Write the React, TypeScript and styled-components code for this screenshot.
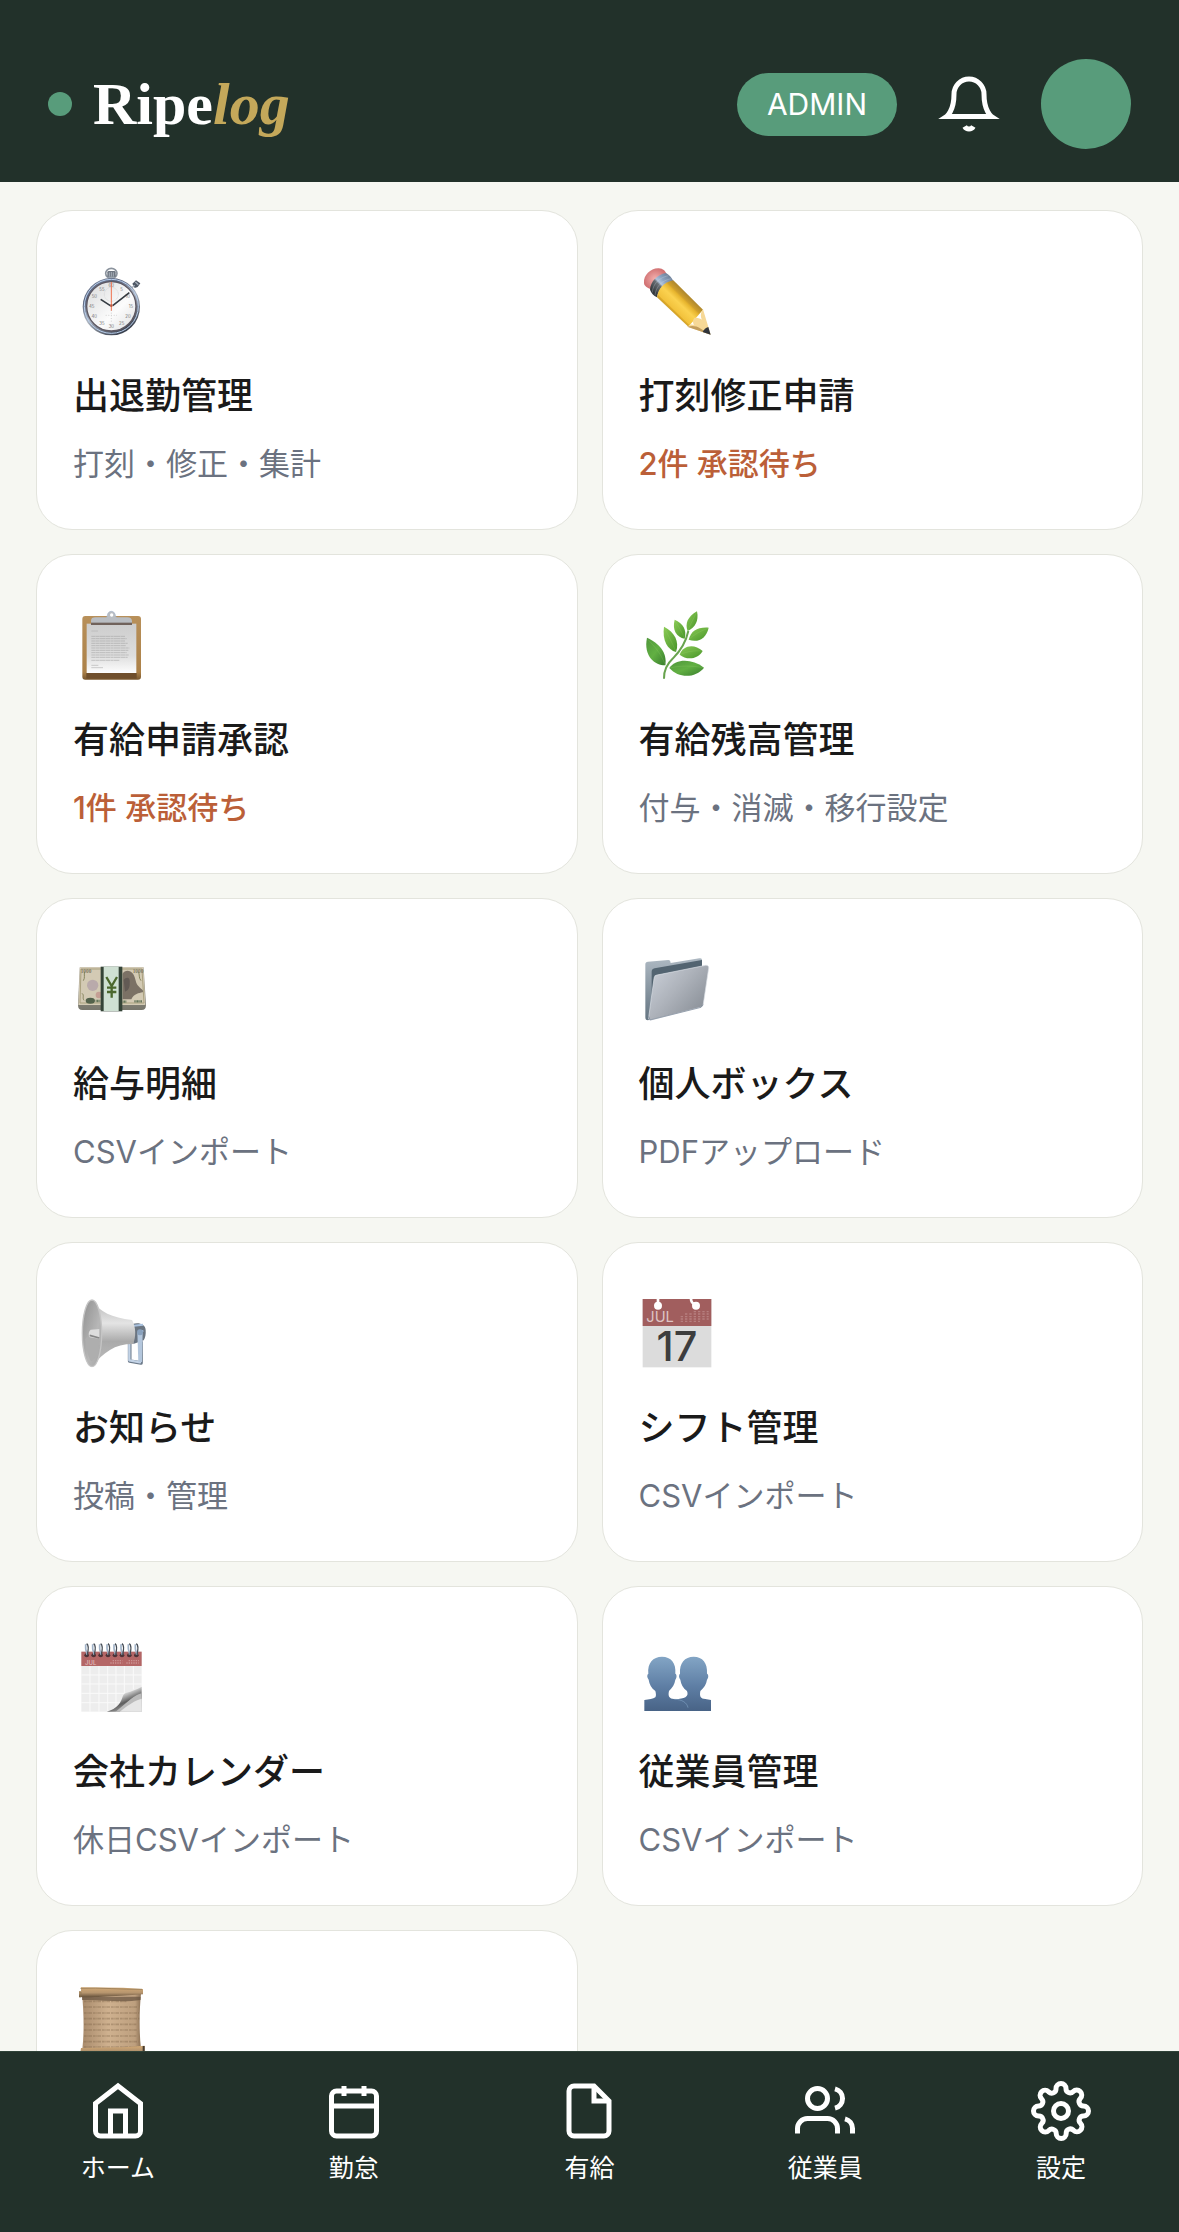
import React, {useState} from 'react';

// Libraries
import styled, {createGlobalStyle, css} from 'styled-components';

const GlobalStyle = createGlobalStyle`
  :root {
    --color-brand-dark: #22312a;
    --color-brand-line: #2f4238;
    --color-accent: #589c7b;
    --color-gold: #c4a85a;
    --color-background: #f6f7f2;
    --color-card: #ffffff;
    --color-border: #e3e4dd;
    --color-text: #1a1a1a;
    --color-text-muted: #6b7280;
    --color-alert: #bb5f38;
  }

  * {
    box-sizing: border-box;
  }

  body {
    margin: 0;
    background: var(--color-background);
    font-family: Inter, 'Noto Sans CJK JP', sans-serif;
    color: var(--color-text);
  }
`;

const Shell = styled.div`
  display: flex;
  flex-direction: column;
  height: 100vh;
`;

const Header = styled.header`
  flex: none;
  display: flex;
  align-items: center;
  justify-content: space-between;
  padding: 59px 48px 33px;
  background: var(--color-brand-dark);
`;

const Brand = styled.a`
  display: flex;
  align-items: center;
  gap: 21px;
  color: #fff;
  text-decoration: none;
`;

const BrandDot = styled.span`
  width: 24px;
  height: 24px;
  border-radius: 50%;
  background: var(--color-accent);
`;

const BrandName = styled.span`
  font-family: 'Liberation Serif', serif;
  font-size: 60px;
  font-weight: 700;
  line-height: 64px;

  em {
    color: var(--color-gold);
  }
`;

const HeaderActions = styled.div`
  display: flex;
  align-items: center;
  gap: 42px;
`;

const RoleBadge = styled.span`
  padding: 0 30px;
  border-radius: 32px;
  background: var(--color-accent);
  color: #fff;
  font-size: 30px;
  line-height: 63px;
`;

const IconButton = styled.button`
  display: flex;
  padding: 0;
  border: 0;
  background: none;
  color: #fff;
  cursor: pointer;
`;

const Avatar = styled.button`
  width: 90px;
  height: 90px;
  padding: 0;
  border: 0;
  border-radius: 50%;
  background: var(--color-accent);
  cursor: pointer;
`;

const LineIcon = styled.svg`
  display: block;
  width: 60px;
  height: 60px;
  fill: none;
  stroke: currentColor;
  overflow: visible;
`;

const Main = styled.main`
  flex: 1;
  min-height: 0;
  padding: 28px 36px;
  overflow-y: auto;
  scrollbar-width: none;
`;

const Grid = styled.div`
  display: grid;
  grid-template-columns: repeat(2, minmax(0, 1fr));
  gap: 24px;
`;

const Card = styled.a`
  min-height: 320px;
  padding: 54px 36px 42px;
  border: 1px solid var(--color-border);
  border-radius: 36px;
  background: var(--color-card);
  color: inherit;
  text-decoration: none;
`;

const CardIcon = styled.svg`
  display: block;
  width: 76px;
  height: 70px;
  overflow: visible;
`;

const CardTitle = styled.h2`
  margin: 34px 0 18px;
  font-size: 36px;
  font-weight: 500;
  line-height: 54px;
`;

const CardNote = styled.p<{$alert?: boolean}>`
  margin: 0;
  font-size: 31px;
  line-height: 46px;
  color: var(--color-text-muted);

  ${({$alert}) =>
    $alert &&
    css`
      color: var(--color-alert);
      font-weight: 500;
    `}
`;

const TabBar = styled.nav`
  flex: none;
  display: grid;
  grid-template-columns: repeat(5, 1fr);
  padding: 29px 0 47px;
  border-top: 1px solid var(--color-brand-line);
  background: var(--color-brand-dark);
`;

const Tab = styled.a`
  display: flex;
  flex-direction: column;
  align-items: center;
  gap: 10px;
  color: #fff;
  font-size: 25px;
  line-height: 34px;
  text-decoration: none;
`;

// Card illustrations
const Stopwatch = () => (
  <CardIcon viewBox="39 45 228 210" aria-hidden="true">
    <defs>
      <linearGradient id="sw-rim" x1="0" y1="0" x2="0.6" y2="1">
        <stop offset="0" stopColor="#8e9aae" />
        <stop offset="0.3" stopColor="#55607a" />
        <stop offset="0.6" stopColor="#aeb6c1" />
        <stop offset="1" stopColor="#39404e" />
      </linearGradient>
      <linearGradient id="sw-face" x1="0" y1="0" x2="1" y2="1">
        <stop offset="0" stopColor="#d9dadb" />
        <stop offset="0.6" stopColor="#fcfcfc" />
        <stop offset="1" stopColor="#dedfe0" />
      </linearGradient>
    </defs>
    <ellipse cx="154" cy="70" rx="17" ry="15" fill="none" stroke="#8b939d" strokeWidth="5" />
    <rect x="142" y="63" width="25" height="19" rx="4" fill="#6d7580" />
    <path d="M148 67v13M154 66v14M160 67v13" stroke="#c5ccd4" strokeWidth="2" />
    <rect x="145" y="80" width="19" height="8" fill="#9ba4ae" />
    <path d="M217 101l11-10 13 9-8 11-9 3z" fill="#4f5865" />
    <path d="M214 115l10-9M226 96l9 8" stroke="#a5aeb9" strokeWidth="4" />
    <circle cx="154" cy="170" r="86" fill="url(#sw-rim)" />
    <circle cx="154" cy="169" r="81" fill="none" stroke="#b9cfed" strokeWidth="3" />
    <circle cx="154" cy="169" r="74" fill="url(#sw-face)" stroke="#5d5862" strokeWidth="4" />
    <circle cx="154" cy="133" r="21" fill="none" stroke="#c8c8c8" strokeWidth="2" strokeDasharray="2 2" />
    <path d="M154 180v35M137 196h34" stroke="#d1d1d1" strokeWidth="3" strokeDasharray="3 5" />
    <g fill="#737373" fontFamily="Inter, sans-serif" fontSize="13" textAnchor="middle">
      <text x="154" y="112">60</text>
      <text x="185" y="122">5</text>
      <text x="203" y="144">10</text>
      <text x="213" y="174">15</text>
      <text x="204" y="204">20</text>
      <text x="185" y="226">25</text>
      <text x="154" y="234">30</text>
      <text x="126" y="226">35</text>
      <text x="103" y="204">40</text>
      <text x="95" y="174">45</text>
      <text x="103" y="144">50</text>
      <text x="126" y="122">55</text>
    </g>
    <path d="M122 148l29 19M158 167l50-39" stroke="#353b42" strokeWidth="5" />
    <path d="M154 96v86" stroke="#f0714f" strokeWidth="3" />
    <circle cx="154" cy="167" r="4" fill="#bd5b43" />
  </CardIcon>
);

const Pencil = () => (
  <CardIcon viewBox="42 45 228 210" aria-hidden="true">
    <defs>
      <linearGradient id="pn-body" gradientUnits="userSpaceOnUse" x1="135" y1="190" x2="187" y2="136">
        <stop offset="0" stopColor="#b69331" />
        <stop offset="0.18" stopColor="#dda928" />
        <stop offset="0.22" stopColor="#f2c23c" />
        <stop offset="0.55" stopColor="#fbd250" />
        <stop offset="0.75" stopColor="#e7b52e" />
        <stop offset="0.82" stopColor="#cf9f2b" />
        <stop offset="1" stopColor="#b28a2d" />
      </linearGradient>
      <linearGradient id="pn-metal" gradientUnits="userSpaceOnUse" x1="86" y1="126" x2="133" y2="80">
        <stop offset="0" stopColor="#353a3e" />
        <stop offset="0.4" stopColor="#696f75" />
        <stop offset="0.5" stopColor="#b1c4dc" />
        <stop offset="0.7" stopColor="#8ba3c1" />
        <stop offset="1" stopColor="#71849d" />
      </linearGradient>
      <radialGradient id="pn-eraser">
        <stop offset="0" stopColor="#f4b1af" />
        <stop offset="1" stopColor="#d27374" />
      </radialGradient>
    </defs>
    <path d="M57 98C55 76 77 54 101 55c14 1 20 8 23 16L81 119C66 112 57 108 57 98z" fill="url(#pn-eraser)" />
    <path d="M75 119c2-24 20-45 48-50 9 5 17 13 22 24-23 4-44 22-49 49-10-5-18-13-21-23z" fill="url(#pn-metal)" />
    <path d="M82 127c2-26 20-44 48-50M90 136c3-27 21-45 49-50" fill="none" stroke="#d4dfec" strokeWidth="2" opacity="0.4" />
    <path d="M96 142c4-27 20-45 49-51l89 88-44 51z" fill="url(#pn-body)" />
    <path d="M234 178l23 76-70-24c7-8 16-8 20-5-5-9-3-21 5-22 8 0 16 3 19 6-5-8-5-20 3-31z" fill="#f6d896" />
    <path d="M187 230l70 24-32-19c-10-7-23-9-38-5z" fill="#c39d5c" />
    <path d="M250 231l7 23-24-8c4-8 9-13 17-15z" fill="#30343a" />
  </CardIcon>
);

const Clipboard = () => (
  <CardIcon viewBox="39 42 228 210" aria-hidden="true">
    <defs>
      <linearGradient id="cb-board" x1="0" y1="0" x2="0" y2="1">
        <stop offset="0" stopColor="#b8905a" />
        <stop offset="0.88" stopColor="#ac8148" />
        <stop offset="1" stopColor="#79572e" />
      </linearGradient>
      <linearGradient id="cb-paper" x1="0" y1="0" x2="0" y2="1">
        <stop offset="0" stopColor="#cdcdcd" />
        <stop offset="0.65" stopColor="#dedede" />
        <stop offset="1" stopColor="#fdfdfd" />
      </linearGradient>
    </defs>
    <rect x="67" y="63" width="176" height="191" rx="9" fill="url(#cb-board)" />
    <rect x="79" y="234" width="151" height="17" fill="#6f4e2b" />
    <rect x="80" y="86" width="149" height="148" fill="url(#cb-paper)" />
    <path d="M94 108h20M94 211h21M94 218h35" stroke="#b5b5b5" strokeWidth="2" />
    <path
      d="M94 124h102M94 131h106M94 138h102M94 145h109M94 152h104M94 159h114M94 166h111M94 173h106M94 180h113M94 187h109M94 196h84"
      stroke="#979797"
      strokeWidth="3"
      strokeDasharray="13 1 9 1 19 1"
      opacity="0.45"
    />
    <path d="M93 87V78c0-8 5-11 13-11h31c4 0 5-3 5-7 2-15 22-15 24 0 0 4 2 7 6 7h30c9 0 14 4 14 12v8z" fill="#b9bdc2" />
    <path d="M139 69c4-3 2-20 15-20s11 17 17 20" fill="none" stroke="#a5b5cd" strokeWidth="2" />
    <circle cx="155" cy="60" r="5" fill="#fff" />
    <rect x="93" y="83" width="123" height="7" fill="#70625b" />
  </CardIcon>
);

const Herb = () => (
  <CardIcon viewBox="41 42 228 210" aria-hidden="true">
    <defs>
      <linearGradient id="hb-light" x1="0" y1="0" x2="1" y2="1">
        <stop offset="0" stopColor="#8bcb55" />
        <stop offset="1" stopColor="#479429" />
      </linearGradient>
      <linearGradient id="hb-deep" x1="0" y1="0" x2="1" y2="1">
        <stop offset="0" stopColor="#4f963b" />
        <stop offset="0.5" stopColor="#62b043" />
        <stop offset="1" stopColor="#377c2d" />
      </linearGradient>
    </defs>
    <path d="M116 251c-1-25 9-44 27-61 20-20 38-45 46-82" fill="none" stroke="#68a34e" strokeWidth="6" />
    <path d="M120 211c-28 1-67-25-55-83 36 17 61 43 55 83z" fill="url(#hb-deep)" />
    <path d="M132 219c21-29 68-28 104-1-25 31-75 34-104 1z" fill="url(#hb-deep)" />
    <path d="M152 171c-25-7-42-35-36-76 32 17 47 44 36 76z" fill="url(#hb-light)" />
    <path d="M163 179c10-29 44-34 69-11-14 25-48 29-69 11z" fill="url(#hb-light)" />
    <path d="M178 131c-25-5-38-26-30-57 25 10 37 31 30 57z" fill="url(#hb-light)" />
    <path d="M190 134c8-27 25-38 60-36-7 31-31 47-60 36z" fill="url(#hb-light)" />
    <path d="M187 108c-9-22 0-43 28-59 6 27-5 50-28 59z" fill="url(#hb-light)" />
    <g fill="none" stroke="#a5d575" strokeWidth="1" opacity="0.6">
      <path d="M68 134c19 20 39 40 52 77M132 219c35-8 65-7 103-1M118 99c10 22 22 42 34 72M163 179c23-10 45-13 67-11M150 78c8 16 19 30 28 53M190 134c16-16 37-27 58-34M187 108c9-22 18-38 27-57" />
    </g>
  </CardIcon>
);

const YenNotes = () => (
  <CardIcon viewBox="39 39 228 210" aria-hidden="true">
    <defs>
      <linearGradient id="yn-edge" x1="0" y1="0" x2="0" y2="1">
        <stop offset="0" stopColor="#b3ac9c" />
        <stop offset="1" stopColor="#77766c" />
      </linearGradient>
    </defs>
    <path d="M59 82h192l7 113c0 10-4 15-13 15H67c-9 0-13-5-13-15z" fill="url(#yn-edge)" />
    <path d="M60 82h190l6 113H55z" fill="#d3cab4" />
    <path d="M63 87h183l6 102H60z" fill="none" stroke="#aaa17f" strokeWidth="3" />
    <circle cx="98" cy="136" r="17" fill="#ae9da7" opacity="0.7" />
    <circle cx="117" cy="165" r="10" fill="#b87474" opacity="0.5" />
    <path d="M74 95c-3 10 2 18-4 27M235 95c5 9 0 18 8 27M66 160c8 6 0 13 6 21" fill="none" stroke="#85845c" strokeWidth="3" />
    <path d="M188 101c7-12 22-11 31 0 8 12 7 25 14 35 9 12 21 15 15 21-12 3-25 3-34 21h-26z" fill="#7b7165" />
    <path d="M191 120c8-11 21-9 18 10 1 13-5 22-14 25z" fill="#625a54" />
    <ellipse cx="91" cy="182" rx="14" ry="9" fill="#53624b" />
    <path d="M107 183h14M188 185h12M223 184h23" stroke="#65765a" strokeWidth="7" strokeDasharray="3 1" />
    <g fill="#827a64" fontFamily="'Liberation Serif', serif" fontWeight="700" fontSize="16">
      <text x="62" y="98">1000</text>
      <text x="218" y="98">1000</text>
    </g>
    <rect x="122" y="80" width="65" height="134" fill="#344337" />
    <rect x="131" y="80" width="45" height="133" fill="#cfe0d3" />
    <path d="M139 111l16 27 16-27M155 138v35M141 143h28M141 156h28" fill="none" stroke="#4b672d" strokeWidth="7" />
  </CardIcon>
);

const Folder = () => (
  <CardIcon viewBox="41 39 228 210" aria-hidden="true">
    <defs>
      <linearGradient id="fd-front" x1="0" y1="0" x2="1" y2="0.8">
        <stop offset="0" stopColor="#ced3dc" />
        <stop offset="0.5" stopColor="#adb2ba" />
        <stop offset="1" stopColor="#878d95" />
      </linearGradient>
      <linearGradient id="fd-back" x1="0" y1="0" x2="0" y2="1">
        <stop offset="0" stopColor="#adb8c2" />
        <stop offset="1" stopColor="#647481" />
      </linearGradient>
    </defs>
    <path d="M60 73c0-5 3-7 8-8l61-5c5 0 6 3 7 9l86-14c6-1 8 1 8 6v125L68 241c-6 0-8-3-8-9z" fill="url(#fd-back)" />
    <path d="M79 97c-1-7 3-11 9-12l142-25v22L88 106l-9 80z" fill="#536471" />
    <path d="M86 116c1-7 4-10 10-11l145-29c7-1 10 3 9 9l-16 107c-1 6-4 9-9 10L77 240c-5 1-8-2-7-7z" fill="url(#fd-front)" stroke="#dce1e7" strokeWidth="2" />
    <path d="M70 229l4 11 153-38 6-8" fill="none" stroke="#738091" strokeWidth="2" />
  </CardIcon>
);

const Loudspeaker = () => (
  <CardIcon viewBox="39 51 228 210" aria-hidden="true">
    <defs>
      <linearGradient id="ls-horn" x1="0" y1="0" x2="0" y2="1">
        <stop offset="0" stopColor="#b5b5b5" />
        <stop offset="0.35" stopColor="#e4e4e4" />
        <stop offset="0.62" stopColor="#aaa" />
        <stop offset="1" stopColor="#bebebe" />
      </linearGradient>
      <linearGradient id="ls-bell" x1="0" y1="0" x2="1" y2="1">
        <stop offset="0" stopColor="#8f8f8f" />
        <stop offset="0.6" stopColor="#b7b7b7" />
        <stop offset="1" stopColor="#a4a4a4" />
      </linearGradient>
    </defs>
    <path d="M209 190v53l34 6v-65" fill="none" stroke="#6b7989" strokeWidth="11" strokeLinejoin="round" />
    <path d="M208 190v51l32 6v-90" fill="none" stroke="#c3d3e6" strokeWidth="7" strokeLinejoin="round" />
    <path d="M218 132c17-6 39 0 39 18 1 12-1 24-6 31l-31 11z" fill="#6b7581" />
    <path d="M221 137l28-3M240 154l10-1" stroke="#a9c2df" strokeWidth="6" />
    <path d="M232 158h16l-2 88-11-1z" fill="#b3c6dc" />
    <circle cx="240" cy="157" r="9" fill="#89a1bd" />
    <path d="M95 59c25 38 60 53 121 61 12 21 13 51 3 72-56 0-87 24-124 69z" fill="url(#ls-horn)" />
    <ellipse cx="96" cy="160" rx="29" ry="100" fill="url(#ls-bell)" stroke="#c5c5c5" strokeWidth="4" />
    <path d="M76 178c8-17 36-18 43 0-2 37-11 59-25 66-8-8-15-32-18-66z" fill="#aeaeae" />
    <path d="M92 149c-6 4-8 17-3 23l29 4v-29z" fill="#ddd" />
    <path d="M89 166l29 8" stroke="#868686" strokeWidth="5" />
  </CardIcon>
);

const CalendarPage = () => (
  <CardIcon viewBox="41 1071 228 210" aria-hidden="true">
    <rect x="52" y="1077" width="206" height="205" fill="#dcdcdc" />
    <rect x="52" y="1077" width="206" height="81" fill="#a15e5e" />
    <path d="M98 1077v19M197 1077c0 9 6 15 15 19" stroke="#fff" strokeWidth="8" fill="none" />
    <circle cx="98" cy="1097" r="12" fill="#fff" />
    <circle cx="212" cy="1097" r="12" fill="#fff" />
    <path
      d="M205 1115h45M179 1122h71M166 1130h84M166 1137h84M166 1144h58"
      stroke="#b67f7f"
      strokeWidth="4"
      strokeDasharray="7 6"
    />
    <text x="63" y="1146" fill="#ddc5c5" fontFamily="Inter, sans-serif" fontSize="44">
      JUL
    </text>
    <text x="155" y="1263" fill="#3d3d3d" fontFamily="Inter, sans-serif" fontSize="124" fontWeight="500" textAnchor="middle">
      17
    </text>
  </CardIcon>
);

const SpiralCalendar = () => (
  <CardIcon viewBox="39 1083 228 210" aria-hidden="true">
    <defs>
      <linearGradient id="sc-curl" x1="0.2" y1="0" x2="0.8" y2="1">
        <stop offset="0" stopColor="#fafafa" />
        <stop offset="0.35" stopColor="#d0d0d0" />
        <stop offset="0.6" stopColor="#5f5f5f" />
        <stop offset="1" stopColor="#d7d7d7" />
      </linearGradient>
    </defs>
    <rect x="64" y="1115" width="181" height="180" fill="#ededed" />
    <rect x="64" y="1115" width="181" height="43" fill="#b46666" />
    <path d="M90 1158v137M117 1158v137M143 1158v137M168 1158v137M193 1158v100M220 1158v70M64 1185h181M64 1212h181M64 1240h135M64 1268h119" stroke="#fafafa" strokeWidth="3" />
    <path d="M245 1220c-16 9-29 13-48 19-8 3-8 10-13 22-7 17-25 30-44 34h105z" fill="url(#sc-curl)" />
    <path d="M245 1240c-20 3-43 27-78 55h78z" fill="#bbb" />
    <path d="M245 1256c-19 4-42 20-66 39h66z" fill="#e6e6e6" />
    <text x="75" y="1154" fill="#e1bcbc" fontFamily="Inter, sans-serif" fontSize="18" fontWeight="500">
      JUL
    </text>
    <path d="M151 1149h36M199 1149h37M158 1142h29M206 1142h31" stroke="#cb9292" strokeWidth="4" strokeDasharray="4 3" />
    {[80, 101, 122, 144, 165, 186, 208, 229].map(x => (
      <g key={x}>
        <ellipse cx={x} cy="1126" rx="7" ry="6" fill="#4e3338" />
        <path d={`M${x - 3} 1093v12c0 8 4 10 4 20`} fill="none" stroke="#a1b3c8" strokeWidth="5" />
        <path d={`M${x} 1091c7 4 5 20 2 34`} fill="none" stroke="#434a53" strokeWidth="4" />
      </g>
    ))}
  </CardIcon>
);

const People = () => (
  <CardIcon viewBox="41 3 228 210" aria-hidden="true">
    <defs>
      <linearGradient id="pp-fill" gradientUnits="userSpaceOnUse" x1="0" y1="50" x2="0" y2="213">
        <stop offset="0" stopColor="#83a5c5" />
        <stop offset="0.55" stopColor="#5e7ea4" />
        <stop offset="1" stopColor="#486386" />
      </linearGradient>
    </defs>
    <g fill="url(#pp-fill)">
      <path d="M164 101c-2-32 14-51 41-51s42 19 40 51c5 2 5 12 0 18-2 14-9 24-20 34-3 17 1 23 15 24l17 3v33H150v-35c27-2 42-7 35-25-12-9-18-21-20-34-5-6-5-15-1-18z" />
      <path d="M69 101c-3-32 14-51 41-51s43 19 40 51c5 2 5 12 0 18-2 14-9 24-19 34-4 17 2 23 15 24 28 0 43 9 43 36H57v-33c14-2 27-3 33-8 3-4 2-13 0-19-12-9-18-20-20-34-5-6-6-15-1-18z" />
    </g>
    <path d="M147 178c23 0 38 10 41 25" fill="none" stroke="#7d9ebf" strokeWidth="2" />
  </CardIcon>
);

const Scroll = () => (
  <CardIcon viewBox="39 255 228 210" aria-hidden="true">
    <defs>
      <linearGradient id="sr-paper" x1="0" y1="0" x2="1" y2="0">
        <stop offset="0" stopColor="#a98b6c" />
        <stop offset="0.45" stopColor="#cfb18f" />
        <stop offset="0.9" stopColor="#bd9f7e" />
        <stop offset="1" stopColor="#8b7054" />
      </linearGradient>
      <linearGradient id="sr-roll" x1="0" y1="0" x2="0" y2="1">
        <stop offset="0" stopColor="#d3aa76" />
        <stop offset="0.55" stopColor="#b6956e" />
        <stop offset="1" stopColor="#64503a" />
      </linearGradient>
    </defs>
    <path d="M66 280h177c-5 53-6 114 0 168H67c6-54 4-115-1-168z" fill="url(#sr-paper)" />
    <path d="M66 290h176v10c-60 9-120-2-176 0z" fill="#65513e" opacity="0.7" />
    <path d="M63 262l127 1 59 4v16l-65 4c-54 2-85 6-127 4v-17h6z" fill="url(#sr-roll)" />
    <path d="M57 276h6v15h-6M61 265c60-3 125 4 185 3" fill="none" stroke="#8d734f" strokeWidth="2" />
    <path
      d="M72 304h127M72 321h160M72 339h165M72 356h166M72 373h157M72 390h158M72 408h157M72 425h163M72 441h159"
      stroke="#796044"
      strokeWidth="5"
      strokeDasharray="7 1 3 2 11 3"
      opacity="0.35"
    />
    <path d="M63 444l128-2 63-5v20l-65 6H60z" fill="url(#sr-roll)" />
    <path d="M248 438h6v17h-6z" fill="#463b2f" />
  </CardIcon>
);

interface MenuItem {
  id: string;
  title?: string;
  note?: string;
  alert?: boolean;
  Icon: React.FC;
}

const menuItems: MenuItem[] = [
  {id: 'attendance', title: '出退勤管理', note: '打刻・修正・集計', Icon: Stopwatch},
  {id: 'corrections', title: '打刻修正申請', note: '2件 承認待ち', alert: true, Icon: Pencil},
  {id: 'leave-approval', title: '有給申請承認', note: '1件 承認待ち', alert: true, Icon: Clipboard},
  {id: 'leave-balance', title: '有給残高管理', note: '付与・消滅・移行設定', Icon: Herb},
  {id: 'payslips', title: '給与明細', note: 'CSVインポート', Icon: YenNotes},
  {id: 'documents', title: '個人ボックス', note: 'PDFアップロード', Icon: Folder},
  {id: 'news', title: 'お知らせ', note: '投稿・管理', Icon: Loudspeaker},
  {id: 'shifts', title: 'シフト管理', note: 'CSVインポート', Icon: CalendarPage},
  {id: 'calendar', title: '会社カレンダー', note: '休日CSVインポート', Icon: SpiralCalendar},
  {id: 'employees', title: '従業員管理', note: 'CSVインポート', Icon: People},
  {id: 'records', Icon: Scroll},
];

const tabs = [
  {
    id: 'home',
    name: 'ホーム',
    icon: (
      <>
        <path d="M3 9l9-7 9 7v11a2 2 0 0 1-2 2H5a2 2 0 0 1-2-2z" />
        <path d="M9 22V12h6v10" />
      </>
    ),
  },
  {
    id: 'work',
    name: '勤怠',
    icon: (
      <>
        <rect x="3" y="4" width="18" height="18" rx="2" />
        <path d="M16 2v4M8 2v4M3 10h18" />
      </>
    ),
  },
  {
    id: 'leave',
    name: '有給',
    icon: (
      <>
        <path d="M14 2H6a2 2 0 0 0-2 2v16a2 2 0 0 0 2 2h12a2 2 0 0 0 2-2V8z" />
        <path d="M14 2v6h6" />
      </>
    ),
  },
  {
    id: 'staff',
    name: '従業員',
    icon: (
      <>
        <path d="M17 21v-2a4 4 0 0 0-4-4H5a4 4 0 0 0-4 4v2" />
        <circle cx="9" cy="7" r="4" />
        <path d="M23 21v-2a4 4 0 0 0-3-3.87M16 3.13a4 4 0 0 1 0 7.75" />
      </>
    ),
  },
  {
    id: 'settings',
    name: '設定',
    icon: (
      <>
        <circle cx="12" cy="12" r="3" />
        <path d="M19.4 15a1.65 1.65 0 0 0 .33 1.82l.06.06a2 2 0 0 1-2.83 2.83l-.06-.06a1.65 1.65 0 0 0-1.82-.33 1.65 1.65 0 0 0-1 1.51V21a2 2 0 0 1-4 0v-.09A1.65 1.65 0 0 0 9 19.4a1.65 1.65 0 0 0-1.82.33l-.06.06a2 2 0 0 1-2.83-2.83l.06-.06A1.65 1.65 0 0 0 4.68 15a1.65 1.65 0 0 0-1.51-1H3a2 2 0 0 1 0-4h.09A1.65 1.65 0 0 0 4.6 9a1.65 1.65 0 0 0-.33-1.82l-.06-.06a2 2 0 0 1 2.83-2.83l.06.06A1.65 1.65 0 0 0 9 4.68a1.65 1.65 0 0 0 1-1.51V3a2 2 0 0 1 4 0v.09a1.65 1.65 0 0 0 1 1.51 1.65 1.65 0 0 0 1.82-.33l.06-.06a2 2 0 0 1 2.83 2.83l-.06.06A1.65 1.65 0 0 0 19.4 9a1.65 1.65 0 0 0 1.51 1H21a2 2 0 0 1 0 4h-.09a1.65 1.65 0 0 0-1.51 1z" />
      </>
    ),
  },
];

const App: React.FC = () => {
  const [activeTab, setActiveTab] = useState('home');

  return (
    <>
      <GlobalStyle />
      <Shell>
        <Header>
          <Brand href="#home">
            <BrandDot />
            <BrandName>
              Ripe<em>log</em>
            </BrandName>
          </Brand>
          <HeaderActions>
            <RoleBadge>ADMIN</RoleBadge>
            <IconButton type="button" aria-label="通知">
              <LineIcon viewBox="0 0 24 24" strokeWidth="2" aria-hidden="true">
                <path d="M18 8A6 6 0 0 0 6 8c0 7-3 9-3 9h18s-3-2-3-9" />
                <path d="M13.73 21a2 2 0 0 1-3.46 0" />
              </LineIcon>
            </IconButton>
            <Avatar type="button" aria-label="アカウント" />
          </HeaderActions>
        </Header>

        <Main>
          <Grid>
            {menuItems.map(({id, title, note, alert, Icon}) => (
              <Card key={id} href={`#${id}`}>
                <Icon />
                {title && <CardTitle>{title}</CardTitle>}
                {note && <CardNote $alert={alert}>{note}</CardNote>}
              </Card>
            ))}
          </Grid>
        </Main>

        <TabBar>
          {tabs.map(({id, name, icon}) => (
            <Tab
              key={id}
              href={`#${id}`}
              aria-current={activeTab === id ? 'page' : undefined}
              onClick={() => setActiveTab(id)}
            >
              <LineIcon viewBox="0 0 24 24" strokeWidth="2" aria-hidden="true">
                {icon}
              </LineIcon>
              {name}
            </Tab>
          ))}
        </TabBar>
      </Shell>
    </>
  );
};

export default App;
